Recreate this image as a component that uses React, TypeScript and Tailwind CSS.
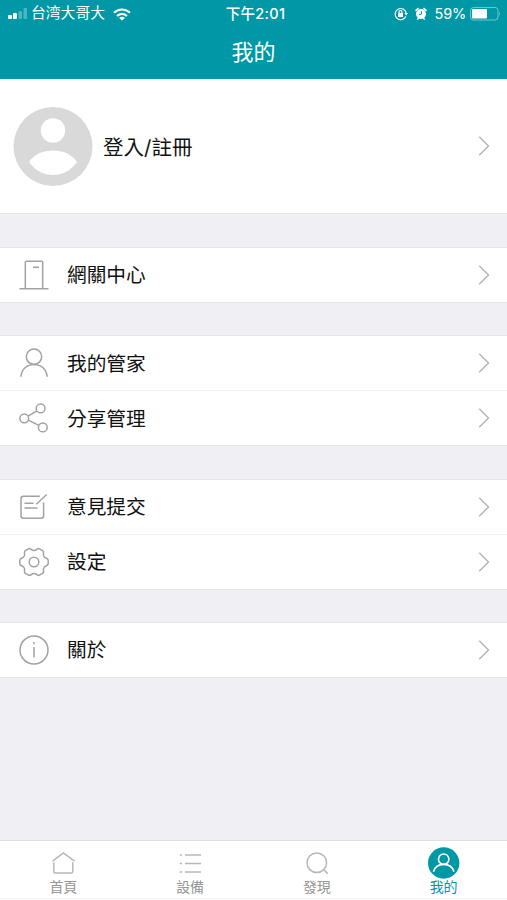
import React from 'react';

const TEAL = '#0097a7';

function Chevron() {
  return (
    <svg className="w-3 h-5 shrink-0" viewBox="0 0 12 20" fill="none" stroke="#b4b4b6" strokeWidth="1.4">
      <path d="M1.2.8 10.5 10 1.2 19.2" />
    </svg>
  );
}

function RowIcon({ children }: { children: React.ReactNode }) {
  return (
    <svg className="w-[30px] h-[30px] shrink-0" viewBox="0 0 30 30" fill="none" stroke="#a2a2a2" strokeWidth="1.5">
      {children}
    </svg>
  );
}

const GatewayIcon = () => (
  <RowIcon>
    <path d="M.5 28.7h29M6.3 28.7V2.2q0-1 1-1h15.4q1 0 1 1v26.5M14 7.2h6" />
  </RowIcon>
);

const PersonIcon = () => (
  <RowIcon>
    <circle cx="15" cy="8.7" r="7.7" />
    <path d="M1.9 28.8C2.4 21.3 8 16.4 15 16.4s12.7 4.9 13.2 12.4" />
  </RowIcon>
);

const ShareIcon = () => (
  <RowIcon>
    <circle cx="5.3" cy="15.3" r="4.4" />
    <circle cx="21.6" cy="5.4" r="4.4" />
    <circle cx="23.8" cy="24.4" r="4.4" />
    <path d="M9 13.1l8.9-5.3M9.2 17.2l10.7 5.2" />
  </RowIcon>
);

const FeedbackIcon = () => (
  <RowIcon>
    <path d="M20.8 4.2H4.5Q2 4.2 2 6.7v17.1q0 2.5 2.5 2.5h17.6q2.5 0 2.5-2.5V10.5M5.5 11.2h9M5.5 16h13M17.3 12.2 27.7 2.5" />
  </RowIcon>
);

const GearIcon = () => (
  <RowIcon>
    <g transform="translate(15 15)">
      {[0, 60, 120, 180, 240, 300].map((angle) => (
        <path
          key={angle}
          transform={`rotate(${angle})`}
          d="M9.9-5.7Q10.6-4.5 12-4Q14.2-3.2 14.2-1.8V1.8Q14.2 3.2 12 4Q10.6 4.5 9.9 5.7"
        />
      ))}
      <circle r="4.8" />
    </g>
  </RowIcon>
);

const InfoIcon = () => (
  <RowIcon>
    <circle cx="15" cy="15" r="14" />
    <path d="M15 12v10.5M15 7v2.2" />
  </RowIcon>
);

const groups = [
  [{ label: '網關中心', Icon: GatewayIcon }],
  [
    { label: '我的管家', Icon: PersonIcon },
    { label: '分享管理', Icon: ShareIcon },
  ],
  [
    { label: '意見提交', Icon: FeedbackIcon },
    { label: '設定', Icon: GearIcon },
  ],
  [{ label: '關於', Icon: InfoIcon }],
];

function StatusBar() {
  return (
    <div className="grid grid-cols-[1fr_auto_1fr] items-center h-7 px-2 text-sm">
      <div className="flex items-center">
        <svg className="w-5 h-3 mr-[3px]" viewBox="0 0 20 12" fill="#fff">
          <rect x="0" y="7" width="4" height="4" rx="1" />
          <rect x="5" y="5" width="4" height="6" rx="1" />
          <rect x="10.5" y="3" width="3.5" height="8" rx="1" opacity=".3" />
          <rect x="15.5" y="0" width="3.5" height="11" rx="1" opacity=".3" />
        </svg>
        <span className="w-[75px] text-[14.8px] whitespace-nowrap">台湾大哥大</span>
        <svg className="w-[18px] h-[13px] ml-[7px]" viewBox="0 0 18 13" fill="none" stroke="#fff" strokeWidth="2.2">
          <path d="M1 4.8c4.6-4.4 11.4-4.4 16 0M4 8c3-2.7 7-2.7 10 0" />
          <path d="M9 12.6 6.1 9.9c1.7-1.5 4.1-1.5 5.8 0z" fill="#fff" stroke="none" />
        </svg>
      </div>
      <div className="ml-1 text-[14.5px] font-medium tracking-[0.3px]">下午2:01</div>
      <div className="flex items-center justify-end">
        <svg className="w-[14px] h-[14px] mr-[7px]" viewBox="0 0 14 14" fill="none" stroke="#fff" strokeWidth="1.2">
          <path d="M11.8 9.5A5.6 5.6 0 1 1 12.2 6" />
          <path d="M10.4 6h3.6l-1.8 2.6z" fill="#fff" stroke="none" />
          <rect x="4" y="6" width="5" height="4" fill="#fff" stroke="none" />
          <path d="M5 6.3V5a1.5 1.5 0 0 1 3 0v1.3" />
        </svg>
        <svg className="w-3 h-[13px] mr-2" viewBox="0 0 12 13" fill="#fff">
          <circle cx="6" cy="7" r="5" />
          <path d="M0 3.3 3 .6l1 1.2L1 4.5zM12 3.3 9 .6 8 1.8l3 2.7zM1.5 12.6l1.8-2 1 1-1.2 1.2zM10.5 12.6l-1.8-2-1 1 1.2 1.2z" />
          <path d="M6.4 4v3.3H4" stroke={TEAL} fill="none" />
        </svg>
        <span className="text-[14.5px] tracking-[-0.2px]">59%</span>
        <svg className="w-[31px] h-[14px] ml-1 -mr-0.5" viewBox="0 0 31 14" fill="none">
          <rect x=".5" y=".5" width="27.5" height="12.5" rx="3" stroke="#fff" opacity=".45" />
          <rect x="2" y="2" width="15" height="9.5" rx="1" fill="#fff" />
          <path d="M29.2 4.5q1.6 2.2 0 4.5z" fill="#fff" opacity=".45" />
        </svg>
      </div>
    </div>
  );
}

function TabBar() {
  return (
    <nav className="border-t border-[#dfdfe3] bg-white text-[#969696] text-[14px] leading-[15px] text-center">
      <div className="grid grid-cols-4 h-[58px] pt-[6px] border-b border-[#f2f2f4]">
        <div className="flex flex-col items-center">
          <svg className="w-8 h-8" viewBox="0 0 32 32" fill="none" stroke="#b7b7bd" strokeWidth="1.5" strokeLinejoin="round">
            <path d="M5.5 14.2 16.5 5.8l11 8.4M6.8 15.3v9.2q0 1.5 1.5 1.5h16q1.5 0 1.5-1.5v-9.2" />
          </svg>
          <span>首頁</span>
        </div>
        <div className="flex flex-col items-center">
          <svg className="w-8 h-8" viewBox="0 0 32 32" fill="none" stroke="#b7b7bd" strokeWidth="1.4">
            <path d="M11 8h16M11 16.5h16M11 25h16M5.7 8h2.2M5.7 16.5h2.2M5.7 25h2.2" />
          </svg>
          <span>設備</span>
        </div>
        <div className="flex flex-col items-center">
          <svg className="w-8 h-8" viewBox="0 0 32 32" fill="none" stroke="#b7b7bd" strokeWidth="1.5">
            <circle cx="15.8" cy="15.7" r="9.8" />
            <path d="m22.8 22.8 3.9 3.8" />
          </svg>
          <span>發現</span>
        </div>
        <div className="flex flex-col items-center text-[#0097a7]">
          <svg className="w-8 h-8" viewBox="0 0 32 32" fill="none" stroke="#fff" strokeWidth="1.6">
            <circle cx="15.7" cy="16" r="15.7" fill={TEAL} stroke="none" />
            <circle cx="15.7" cy="12.2" r="5.2" />
            <path d="M5.4 24.7c1.4-4.7 5.3-7.3 10.3-7.3s8.9 2.6 10.3 7.3" />
          </svg>
          <span>我的</span>
        </div>
      </div>
      <div className="h-px" />
    </nav>
  );
}

export default function App() {
  return (
    <div className="flex flex-col h-screen bg-[#efeff4] text-[#111] font-[Inter,'Noto_Sans_CJK_TC',sans-serif]">
      <header className="h-[79px] shrink-0 bg-[#0097a7] text-white">
        <StatusBar />
        <h1 className="h-12 text-center text-[22px] leading-[49px]">我的</h1>
      </header>

      <main className="flex-1">
        <section className="flex items-center h-[134.5px] pl-[13px] pr-[17px] bg-white border-b border-[#e8e8ec]">
          <svg className="w-20 h-20" viewBox="0 0 80 80">
            <circle cx="40" cy="40.5" r="39.5" fill="#d9d9d9" />
            <circle cx="40" cy="24.5" r="12.2" fill="#fff" />
            <path d="M16 56C26 40.8 54 40.8 64 56 52 73.3 28 73.3 16 56Z" fill="#fff" />
          </svg>
          <span className="flex-1 ml-[10px] pt-[5px] text-[20.5px]">登入/註冊</span>
          <Chevron />
        </section>

        <div className="pt-px">
          {groups.map((rows, i) => (
            <section key={i} className="mt-[32.4px] bg-white border-t border-b border-t-[#e6e6ea] border-b-[#e6e6ea] divide-y divide-[#f2f2f4]">
              {rows.map(({ label, Icon }) => (
                <div key={label} className="flex items-center h-[54px] not-last:h-[55px] pl-[19px] pr-[17px]">
                  <Icon />
                  <span className="flex-1 ml-[18px] pt-0.5 text-[19.7px]">{label}</span>
                  <Chevron />
                </div>
              ))}
            </section>
          ))}
        </div>
      </main>

      <TabBar />
    </div>
  );
}
